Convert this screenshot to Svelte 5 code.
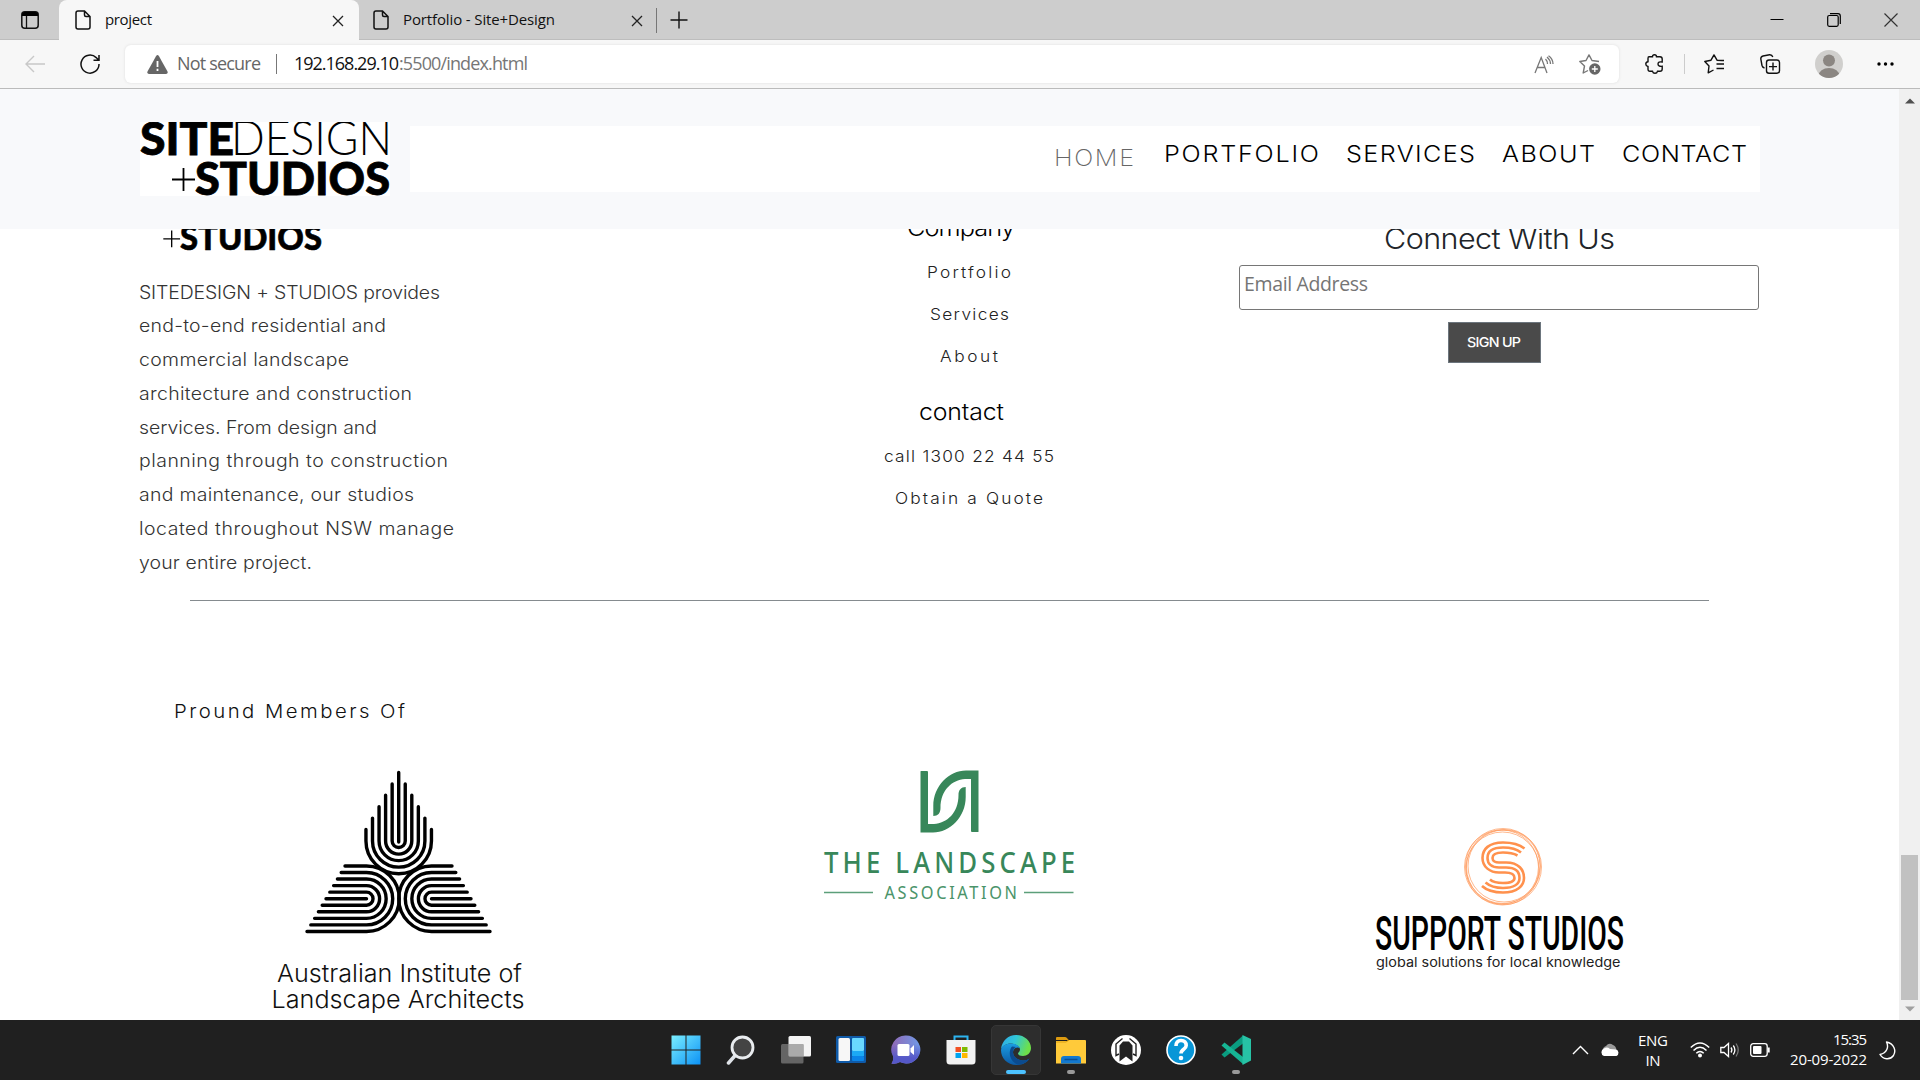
<script>
  // Spreads a line of text to a given width: glyphs are widened by `stretch`,
  // and letter-spacing takes up the rest.
  function fit(node, [width, stretch = 1]) {
    const natural = node.getBoundingClientRect().width;
    const gaps = node.textContent.length - 1;
    const inner = width / stretch;
    const spacing = (inner - natural) / gaps;
    node.style.letterSpacing = `${spacing}px`;
    node.style.marginRight = `${width - inner - spacing}px`;
    if (stretch !== 1) {
      node.style.display = 'inline-block';
      node.style.transformOrigin = '0 50%';
      node.style.transform = `scaleX(${stretch})`;
    }
  }

  const nav = [
    { label: 'PORTFOLIO', w: 155 },
    { label: 'SERVICES', w: 129 },
    { label: 'ABOUT', w: 93 },
    { label: 'CONTACT', w: 125 }
  ];

  const about = [
    ['SITEDESIGN + STUDIOS provides', 301],
    ['end-to-end residential and', 247],
    ['commercial landscape', 210],
    ['architecture and construction', 273],
    ['services. From design and', 238],
    ['planning through to construction', 309],
    ['and maintenance, our studios', 275],
    ['located throughout NSW manage', 315],
    ['your entire project.', 173]
  ];

  const company = [['Portfolio', 84], ['Services', 79], ['About', 58]];
  const contact = [['call 1300 22 44 55', 170], ['Obtain a Quote', 148]];
  const rings = [1, 2, 3, 4, 5];
</script>

{#snippet brand()}
  <svg class="brand" viewBox="0 0 250 74">
    <rect width="250" height="74" fill="#fff" />
    <text class="heavy" x="0" y="33.2" textLength="94" lengthAdjust="spacingAndGlyphs">SITE</text>
    <text class="hair" x="91" y="33.2" textLength="161" lengthAdjust="spacingAndGlyphs">DESIGN</text>
    <path d="M32 57.5H55M43.5 46V69" stroke="#000" stroke-width="1.8" />
    <text class="heavy" x="55" y="73" textLength="195" lengthAdjust="spacingAndGlyphs">STUDIOS</text>
  </svg>
{/snippet}

{#snippet page()}
  <svg class="doc" viewBox="0 0 16 20"><path d="M3 1H9.5L15 6.5V17a2 2 0 0 1-2 2H3a2 2 0 0 1-2-2V3a2 2 0 0 1 2-2ZM9.5 1V5a1.5 1.5 0 0 0 1.5 1.5H15" fill="none" stroke="#111" stroke-width="1.5" /></svg>
{/snippet}

{#snippet cross()}
  <svg class="cross" viewBox="0 0 12 12"><path d="M1 1L11 11M11 1L1 11" stroke="#222" stroke-width="1.3" /></svg>
{/snippet}

<div class="screen">
  <div class="tabs">
    <div class="actions">
      <svg width="18" height="18" viewBox="0 0 18 18"><rect x=".8" y=".8" width="16.4" height="16.4" rx="3" fill="none" stroke="#111" stroke-width="1.5" /><path d="M1 5V3.5A2.5 2.5 0 0 1 3.5 1h11A2.500 2.500 0 0 1 17 3.500V5Z" /><path d="M5.500 5V17" stroke="#111" stroke-width="1.300" /></svg>
    </div>
    <div class="tab active">{@render page()}<span class="tt" use:fit={[47]}>project</span>{@render cross()}</div>
    <div class="tab">{@render page()}<span class="tt" use:fit={[152]}>Portfolio - Site+Design</span>{@render cross()}</div>
    <div class="newtab"><svg width="18" height="18" viewBox="0 0 18 18"><path d="M9 .5V17.500M.5 9H17.500" stroke="#111" stroke-width="1.400" /></svg></div>
    <div class="win">
      <svg width="14" height="14"><path d="M.5 6.500H13.500" stroke="#000" /></svg>
      <svg width="14" height="14"><rect x=".7" y="2.500" width="10.500" height="10.800" rx="1.500" fill="none" stroke="#000" stroke-width="1.200" /><path d="M3 .7H11A2.300 2.300 0 0 1 13.300 3V11" fill="none" stroke="#000" stroke-width="1.200" /></svg>
      <svg width="14" height="14"><path d="M.5 .5L13.500 13.500M13.500 .5L.5 13.500" stroke="#333" stroke-width="1.200" /></svg>
    </div>
  </div>

  <div class="toolbar">
    <svg class="back" width="20" height="18"><path d="M9 1L1 9L9 17M1 9H20" fill="none" stroke="#c8c8c8" stroke-width="1.400" /></svg>
    <svg class="reload" width="20" height="20"><path d="M19 10A9 9 0 1 1 16.200 3.600L18.500 6M19 1V6.300H13.500" fill="none" stroke="#111" stroke-width="1.500" /></svg>
    <div class="address">
      <svg class="warn" width="21" height="19"><path d="M9 1.200Q10.500-1 12 1.200L20.500 16.500Q21.200 19 19 19H2Q-.2 19 .5 16.500Z" fill="#666" /><path d="M10.500 6V12M10.500 13.800V16" stroke="#fff" stroke-width="1.800" /></svg>
      <span class="ns" use:fit={[84]}>Not secure</span>
      <i></i>
      <span class="ip" use:fit={[105]}>192.168.29.10</span><span class="path" use:fit={[129]}>:5500/index.html</span>
      <svg class="aloud" width="20" height="19"><path d="M1 18L7.200 2.500L13 18M3.200 12.500H11M11.500 4Q13.500 6 13.500 9M13 2Q16.500 5 16.500 9M14.500 .8Q19 4 19 9" fill="none" stroke="#777" stroke-width="1.300" /></svg>
      <svg class="fav" width="22" height="21"><path d="M20 7.500L13 6.500L10 .9L7 6.500L.8 7.500L5.500 12L4.200 19L9 16.500" fill="none" stroke="#777" stroke-width="1.400" stroke-linejoin="round" /><circle cx="15.800" cy="15" r="5.700" fill="#666" /><path d="M12.800 15H18.800M15.800 12V18" stroke="#fff" stroke-width="1.300" /></svg>
    </div>
    <div class="tools">
      <svg width="20" height="20" viewBox="0 0 20 20"><path d="M4 2.800H7.500Q7.500 .8 9.500 .8T11.500 2.800H15Q17.200 2.800 17.200 5V8Q13 7.300 13 10T17.200 12.300V15Q17.200 17.300 15 17.300H12.500Q12 19.300 10 19.300T7.500 17.300H5Q3 17.300 3 15V12.500Q.8 12 .8 10T3 7.700V4.500Q3 2.800 4 2.800Z" fill="none" stroke="#111" stroke-width="1.400" /></svg>
      <i></i>
      <svg width="21" height="20"><path d="M18 6.500L13 6.200L10 .9L7 6.200L.8 7.500L5 12L4.200 18.800L9.500 16M12.500 10H20M12.500 14.500H20M14 6.500H20" fill="none" stroke="#111" stroke-width="1.400" stroke-linejoin="round" /></svg>
      <svg width="21" height="20"><path d="M4.500 14Q2.500 13.500 2 11.500L.8 5Q.7 2.500 3 2L9.500 .8Q12 .6 12.800 3" fill="none" stroke="#111" stroke-width="1.400" /><rect x="6.500" y="6" width="13" height="13.200" rx="2.500" fill="none" stroke="#111" stroke-width="1.400" /><path d="M9 12.600H17M13 8.600V16.600" stroke="#111" stroke-width="1.400" /></svg>
      <svg width="28" height="28"><defs><clipPath id="av"><circle cx="14" cy="14" r="14" /></clipPath></defs><g clip-path="url(#av)"><rect width="28" height="28" fill="#d0cfcd" /><circle cx="14" cy="10.500" r="6" fill="#8b8682" /><ellipse cx="14" cy="26" rx="10.500" ry="8" fill="#8b8682" /></g></svg>
      <svg width="17" height="4"><circle cx="2" cy="2" r="1.700" /><circle cx="8.500" cy="2" r="1.700" /><circle cx="15" cy="2" r="1.700" /></svg>
    </div>
  </div>

  <div class="view">
    <div class="site">
      <header>
        <div class="logo">{@render brand()}</div>
        <nav>
          <a class="home"><span use:fit={[80, 1.12]}>HOME</span></a>
          {#each nav as n}<a><span use:fit={[n.w, 1.12]}>{n.label}</span></a>{/each}
        </nav>
      </header>

      <section class="columns">
        <div class="col-a">
          <div class="small-logo">{@render brand()}</div>
          {#each about as [line, w]}<p><span use:fit={[w, 1.08]}>{line}</span></p>{/each}
        </div>
        <div class="col-b">
          <h3><span use:fit={[108, 1.1]}>Company</span></h3>
          {#each company as [t, w]}<a><span use:fit={[w, 1.08]}>{t}</span></a>{/each}
          <h3 class="second"><span use:fit={[85, 1.08]}>contact</span></h3>
          {#each contact as [t, w]}<a><span use:fit={[w, 1.08]}>{t}</span></a>{/each}
        </div>
        <div class="col-c">
          <h2><span use:fit={[231, 1.09]}>Connect With Us</span></h2>
          <div class="input"><span use:fit={[124]}>Email Address</span></div>
          <button><span use:fit={[54, 1.06]}>SIGN UP</span></button>
        </div>
      </section>
      <hr />
      <h4><span use:fit={[231, 1.1]}>Pround Members Of</span></h4>

      <section class="members">
        <svg class="aila" viewBox="270 765 260 255" width="260" height="255">
          <g fill="none" stroke="#000" stroke-width="3.400" stroke-linecap="round">
            <path d="M398.700 772.500V842M326 898.700H366.500M471 898.700H431.500" />
            {#each rings as k}
              <path d="M{398.7 - 6.55 * k} {772.5 + 11.4 * k}V841A{6.55 * k} {6.55 * k} 0 0 0 {398.7 + 6.55 * k} 841V{772.5 + 11.4 * k}" />
              <path d="M{326 + 3.8 * k} {898.7 - 6.55 * k}H366.500A{6.55 * k} {6.55 * k} 0 0 1 366.500 {898.7 + 6.55 * k}H{326 - 3.8 * k}" />
              <path d="M{471 - 3.8 * k} {898.7 - 6.55 * k}H431.500A{6.55 * k} {6.55 * k} 0 0 0 431.500 {898.7 + 6.55 * k}H{471 + 3.8 * k}" />
            {/each}
          </g>
          <text class="thin" x="277" y="981.700" textLength="245" lengthAdjust="spacingAndGlyphs">Australian Institute of</text>
          <text class="thin" x="271.500" y="1007.500" textLength="253" lengthAdjust="spacingAndGlyphs">Landscape Architects</text>
        </svg>

        <svg class="land" viewBox="0 0 300 160" width="300" height="160">
          <g fill="#38875a">
            <path d="M120.500 21.500Q120.500 21 121 21H127Q128 21 128 22V74H134C147 73 158.500 63 158.500 45C158.500 40 161 37 165.700 37V47C165.700 67 150 82.500 133 82.500H120.500Z" />
            <path transform="rotate(180 149.500 51.500)" d="M120.500 21.500Q120.500 21 121 21H127Q128 21 128 22V74H134C147 73 158.500 63 158.500 45C158.500 40 161 37 165.700 37V47C165.700 67 150 82.500 133 82.500H120.500Z" />
          </g>
          <text class="the" transform="translate(24 123.300) scale(.92 1)" textLength="273">THE LANDSCAPE</text>
          <text class="assoc" transform="translate(84.500 148.500) scale(.86 1)" textLength="154">ASSOCIATION</text>
          <path d="M24 142.500H73M224 142.500H273.500" stroke="#5c9f7a" stroke-width="1.300" />
        </svg>

        <svg class="support" viewBox="20 15 260 150" width="260" height="150">
          <g fill="none" stroke="#ff9a5c" stroke-width=".7">
            <circle cx="151.500" cy="57" r="37" /><circle cx="154" cy="57" r="37.500" /><circle cx="153" cy="56" r="37.500" /><circle cx="152.500" cy="58.500" r="36.500" /><circle cx="154" cy="56" r="36" />
          </g>
          <g fill="none" stroke="#ff914d" stroke-width="2.600">
            <path d="M174.500 38.500Q167 32.500 153 32.500C139 32.500 132.500 39 132.500 48S140 62.500 149 62.500H155C162 62.500 164.500 65 164.500 68S161 73 153 73Q144 73 140 69.500" />
            <path d="M171 42.500Q165 37.500 153 37.500C142 37.500 137.500 42 137.500 48S142 57.500 149 57.500H156C166 57.500 169.500 62 169.500 68S164 78 153 78Q142 78 135.500 72.500" />
            <path d="M167.500 45.500Q162 42.500 153 42.500C145.500 42.500 142.500 45 142.500 48S145.500 52.500 149 52.500H156C169 52.500 174 60 174 68S167 82.500 153 82.500Q139 82.500 132 76" />
          </g>
          <text class="sup" x="25" y="140.300" textLength="249" lengthAdjust="spacingAndGlyphs">SUPPORT STUDIOS</text>
          <text class="tag" x="26" y="156.500" textLength="244.500" lengthAdjust="spacingAndGlyphs">global solutions for local knowledge</text>
        </svg>
      </section>
    </div>
    <div class="scroll">
      <svg width="10" height="6"><path d="M0 5.500L5 .5L10 5.500Z" fill="#505050" /></svg>
      <div class="thumb"></div>
      <svg width="10" height="6"><path d="M0 .5L5 5.500L10 .5Z" fill="#a0a0a0" /></svg>
    </div>
  </div>

  <footer>
    <div class="apps">
      <div class="app"><svg viewBox="0 0 30 30"><defs><linearGradient id="w" gradientUnits="userSpaceOnUse" x1="0" y1="0" x2="30" y2="30"><stop offset="0" stop-color="#7cf0ff" /><stop offset="1" stop-color="#0a90f5" /></linearGradient></defs><path fill="url(#w)" d="M.5 .5H14.500V14.500H.5ZM15.500 .5H29.500V14.500H15.500ZM.5 15.500H14.500V29.500H.5ZM15.500 15.500H29.500V29.500H15.500Z" /></svg></div>
      <div class="app"><svg viewBox="0 0 30 30"><path d="M2.500 28L10 19.500" stroke="#dfe3e8" stroke-width="3.500" stroke-linecap="round" /><circle cx="16.500" cy="12.500" r="10.500" fill="#444" stroke="#e9ecef" stroke-width="2.800" /></svg></div>
      <div class="app"><svg viewBox="0 0 30 30"><rect x="7.500" y="1" width="22.500" height="20.500" rx="1.500" fill="#f4f4f4" /><rect x="0" y="9" width="22.500" height="19.500" rx="1.500" fill="#777" fill-opacity=".8" /><path d="M7.500 9H22.500V21.500H9Q7.500 21.500 7.500 20Z" fill="#aaa" /></svg></div>
      <div class="app"><svg viewBox="0 0 30 30"><rect y="1" width="30" height="27" rx="1.500" fill="#0f5aa8" /><rect x="2.500" y="3" width="11.500" height="23" rx="1.500" fill="#f7f7f7" /><rect x="16" y="3" width="12" height="13" rx="1" fill="#69d8ff" /><rect x="16" y="16" width="12" height="5" fill="#1ba9f5" /><rect x="16" y="21" width="12" height="5" rx="1" fill="#0a84e8" /></svg></div>
      <div class="app"><svg viewBox="0 0 30 30"><defs><linearGradient id="c" x1="0" y1="0" x2="1" y2="0"><stop offset="0" stop-color="#9268b5" /><stop offset="1" stop-color="#6f9be8" /></linearGradient><linearGradient id="c2" x1="0" y1="0" x2="0" y2="1"><stop offset=".3" stop-color="#5558c8" stop-opacity="0" /><stop offset=".8" stop-color="#5558c8" /></linearGradient></defs><path fill="url(#c)" d="M15 .5A14 14 0 1 1 9 27Q5 29.500 .5 28.500Q3 25 2 21A14 14 0 0 1 15 .5Z" /><path fill="url(#c2)" d="M15 .5A14 14 0 1 1 9 27Q5 29.500 .5 28.500Q3 25 2 21A14 14 0 0 1 15 .5Z" /><rect x="6.500" y="9" width="12" height="12" rx="1.500" fill="#fff" /><path d="M19.500 13.500L23 10V20L19.500 17Z" fill="#fff" /></svg></div>
      <div class="app"><svg viewBox="0 0 30 30"><path d="M8.500 7V1.500H21.500V7" fill="none" stroke="#2cb4f0" stroke-width="2" /><path d="M.5 5H29.500V26Q29.500 29.500 26 29.500H4Q.5 29.500 .5 26Z" fill="#f2f2f2" /><path fill="#f25022" d="M9.500 12H15V17H9.500Z" /><path fill="#7fba00" d="M16 12H21.500V17H16Z" /><path fill="#00a4ef" d="M9.500 18H15V23H9.500Z" /><path fill="#ffb900" d="M16 18H21.500V23H16Z" /></svg></div>
      <div class="app current"><svg viewBox="0 0 30 30"><defs><linearGradient id="e" x1="0" y1="0" x2="1" y2=".3"><stop offset="0" stop-color="#2fa8e8" /><stop offset=".5" stop-color="#30c6d8" /><stop offset="1" stop-color="#6de04a" /></linearGradient><linearGradient id="e2" x1="0" y1="0" x2="0" y2="1"><stop offset="0" stop-color="#1b9de2" /><stop offset="1" stop-color="#0c59a4" /></linearGradient></defs><path fill="url(#e)" d="M0 14C1 6 7 0 15 0C24 0 30 6.500 30 13C30 18 26 21 22 21C18.500 21 17 19.500 17 18.500C17 17.500 19 17 19 14.500C19 11 14 8.500 10 8.500C5 8.500 1.500 11 0 14Z" /><path fill="url(#e2)" d="M0 15C.5 11 5 8.500 10 8.500C14 8.500 18 10.500 19 13C14 11 12 15 12 17.500C12 22 17 25.500 22 25.500C25 25.500 27 24.500 28.500 23.500C25.500 28 21 30 15.500 30C6 30 0 23 0 15Z" /><path fill="#0b4b8f" d="M11 11.500C7 16 8 26 17 29.800C21.500 29.500 26 27.500 28.500 23.500C27 24.500 25 25.500 22 25.500C17 25.500 12 22 12 17.500C12 15 13 12.500 15 12Z" /></svg><b></b></div>
      <div class="app"><svg viewBox="0 0 30 30"><path d="M0 3Q0 2 1 2H9Q10 2 11 3L12.500 5H0Z" fill="#dc9a10" /><path d="M0 6H11L13 5H29Q30 5 30 6V28.500H0Z" fill="#ffca3a" /><path d="M0 7H10L13 5" stroke="#e0a010" fill="none" /><path d="M5 28.500V24Q5 21 8 21H22Q25 21 25 24V28.500Z" fill="#1379cf" /><path d="M8.500 24.500H21.500" stroke="#0a4f94" stroke-width="1.500" /></svg><b class="dot"></b></div>
      <div class="app"><svg viewBox="0 0 30 30"><circle cx="15" cy="15" r="15" fill="#fff" /><path d="M8.500 26.500V10.500L12 6.500H18L21.500 10.500V26.500L15 21.500Z" fill="#222" /><path d="M11.500 3.500L5 9V20.500L8 19M18.500 3.500L25 9V20.500L22 19" fill="none" stroke="#222" stroke-width="1.400" /></svg></div>
      <div class="app"><svg viewBox="0 0 30 30"><circle cx="15" cy="15" r="14" fill="#0896d7" stroke="#fff" stroke-width="1.600" /><path d="M10 11Q10 5.500 15 5.500T20.200 10.500C20.200 14.500 15 14 15 18.500" fill="none" stroke="#fff" stroke-width="3.600" /><circle cx="15" cy="23" r="2.300" fill="#fff" /></svg></div>
      <div class="app"><svg viewBox="0 0 30 30"><path d="M.5 19.500L3.500 22.500L22 8.500V.5Z" fill="#0a9c80" /><path d="M.5 10.500L3.500 7.500L22 22V29Z" fill="#16b594" /><path d="M21.500 0L30 4V25.500L21.500 30Z" fill="#27c2a5" /></svg><b class="dot"></b></div>
    </div>
    <div class="tray">
      <svg class="chev" width="17" height="10"><path d="M1 9L8.500 1.500L16 9" fill="none" stroke="#fff" stroke-width="1.400" /></svg>
      <svg class="cloud" width="20" height="14"><path d="M3 9A5 5 0 0 1 6 3Q9 -1 13 2Q16 3 16.500 7Z" fill="#999" /><path d="M4 13A4 4 0 0 1 4 5.500Q7 3.500 10 6L16 6.500A3.500 3.500 0 0 1 16.500 13Z" fill="#fff" /></svg>
      <div class="lang"><span use:fit={[30]}>ENG</span><span use:fit={[15]}>IN</span></div>
      <svg class="wifi" width="20" height="16"><path d="M.8 5.500Q10-3.500 19.200 5.500M3.500 8.500Q10 2 16.500 8.500M6.300 11.300Q10 7.500 13.700 11.300" fill="none" stroke="#fff" stroke-width="1.500" /><circle cx="10" cy="13.500" r="2" fill="#fff" /></svg>
      <svg class="vol" width="20" height="16"><path d="M.8 5.500H4L8.500 1.500V14.500L4 10.500H.8ZM11 5.500Q12.800 8 11 10.500M13.300 3.500Q16.500 8 13.300 12.500" fill="none" stroke="#fff" stroke-width="1.300" /><path d="M16 1.500Q20.500 8 16 14.500" fill="none" stroke="#777" stroke-width="1.300" /></svg>
      <svg class="bat" width="20" height="14"><rect x=".7" y=".7" width="16.500" height="12.600" rx="2.500" fill="none" stroke="#fff" stroke-width="1.300" /><rect x="3" y="3" width="8.500" height="8" rx="1" fill="#fff" /><path d="M18.700 4.500V9.500" stroke="#fff" stroke-width="2" /></svg>
      <div class="clock"><span use:fit={[34]}>15:35</span><span use:fit={[77]}>20-09-2022</span></div>
      <svg class="moon" width="17" height="19"><path d="M7.500 1C10 6 8 12 1 13.500C4 18.500 11 19.500 14.500 14.500C17.500 9.500 15 2.500 7.500 1Z" fill="none" stroke="#fff" stroke-width="1.400" stroke-linejoin="round" /></svg>
    </div>
  </footer>
</div>

<style>
  :global(body) { margin: 0; background: #fff; overflow: hidden; }
  * { box-sizing: border-box; }
  svg { display: block; flex: none; }
  span { white-space: pre; }
  .screen { width: 1920px; height: 1080px; overflow: hidden; display: flex; flex-direction: column; font-family: 'Open Sans', 'Noto Sans', sans-serif; color: #111; }

  .tabs { height: 40px; background: #cdcdcd; display: flex; flex: none; border-bottom: 1px solid #bdbdbd; }
  .actions { width: 59px; padding: 11px 0 0 21px; }
  .tab { width: 298px; height: 40px; display: flex; align-items: center; padding: 0 14px 8px 14px; }
  .tab.active { width: 300px; background: #f7f7f7; border-radius: 8px 8px 0 0; padding: 0 15px 8px 16px; }
  .doc { width: 16px; height: 20px; margin: 8px 14px 0 0; }
  .cross { width: 12px; height: 12px; margin: 9px 0 0 auto; }
  .tt { font-size: 15px; line-height: 20px; margin-top: 6px; }
  .newtab { height: 25px; margin: 8px 0 0 -1px; border-left: 1px solid #777; padding: 3px 0 0 13px; }
  .win { margin-left: auto; display: flex; gap: 43px; padding: 13px 22px 0 0; }

  .toolbar { height: 49px; flex: none; background: #f7f7f7; border-bottom: 1px solid #bbb; display: flex; align-items: center; padding: 0 26px 0 25px; }
  .reload { margin-left: 35px; }
  .address { width: 1494px; height: 38px; margin-left: 25px; background: #fff; border-radius: 6px; box-shadow: 0 0 3px #ddd; display: flex; align-items: center; padding: 0 18px 0 22px; font-size: 18px; line-height: 24px; flex: none; }
  .address span { margin-top: -2px; }
  .ns { margin-left: 9px; color: #666; }
  .address i { width: 1px; height: 20px; background: #777; margin: 0 17px 0 15px; }
  .path { color: #767676; }
  .aloud { margin-left: auto; }
  .fav { margin-left: 25px; }
  .tools { display: flex; align-items: center; margin-left: 26px; flex: 1; justify-content: space-between; }
  .tools i { width: 1px; height: 20px; background: #ccc; margin: 0 -15px; }

  .view { flex: 1; min-height: 0; display: flex; overflow: hidden; }
  .site { width: 1899px; flex: none; font-family: Inter, 'Open Sans', sans-serif; font-weight: 300; }
  header { height: 140px; background: #f8f9fb; position: relative; z-index: 2; display: flex; padding: 33px 139px 0 140px; }
  .logo { width: 250px; margin-right: 20px; }
  nav { flex: 1; height: 66px; margin-top: 4px; background: #fff; display: flex; justify-content: flex-end; padding: 13px 13px 0 0; gap: 27px; font-size: 22.500px; line-height: 30px; color: #000; }
  .home { padding-top: 4px; margin-right: 3px; color: #666; font-weight: 200; }
  .brand { width: 100%; }
  .brand text { font-family: Lato, sans-serif; font-size: 46.500px; }
  .brand .heavy { font-weight: 900; stroke: #000; stroke-width: .8; }
  .brand .hair { font-weight: 300; }

  .columns { height: 371px; display: flex; padding: 0 140px; }
  .col-a { width: 350px; margin-top: -32px; }
  .small-logo { width: 182px; height: 54px; margin-bottom: 24.500px; }
  p { margin: 0 0 0 -1px; height: 33.750px; line-height: 33.750px; font-size: 18px; color: #333; }
  .col-b { width: 200px; margin: -16px 0 0 379px; display: flex; flex-direction: column; align-items: center; }
  .col-b h3 { margin: 0 16px 8px 0; font-weight: 300; font-size: 23px; line-height: 30px; color: #000; }
  .col-b h3.second { margin-top: 19.500px; }
  .col-b a { font-size: 16px; height: 42px; line-height: 42px; color: #222; }
  .col-c { width: 520px; margin: -9px 0 0 170px; display: flex; flex-direction: column; align-items: center; }
  h2 { margin: 0; font-weight: 300; font-size: 28px; line-height: 38px; height: 45px; color: #212529; }
  .input { width: 520px; height: 45px; border: 1px solid #767676; border-radius: 3px; padding: 4px 0 0 4px; font: 400 19.500px/27px 'Open Sans', sans-serif; color: #757575; }
  button { margin: 12px 10px 0 0; width: 93px; height: 41px; padding: 0 0 2px; border: 1px solid #6c757d; background: #4a4a4a; color: #fff; font: 500 13.500px/20px Inter, sans-serif; }
  hr { width: 1519px; height: 1px; border: 0; background: #858b8f; margin: 0 0 0 190px; }
  h4 { margin: 95px 0 0 174px; font-weight: 300; font-size: 18.500px; line-height: 30px; color: #111; }
  .members { display: flex; margin-top: 39px; padding-left: 270px; align-items: flex-start; }
  .land { margin: -15px 0 0 270px; }
  .support { margin: 60px 0 0 270px; }
  .thin { font: 300 24px Inter, sans-serif; fill: #111; }
  .the { font: 500 28px 'Noto Sans', sans-serif; fill: #38875a; }
  .assoc { font: 400 19px 'Noto Sans', sans-serif; fill: #4b946a; }
  .sup { font: 500 47.500px Roboto, sans-serif; }
  .tag { font: 400 13px Inter, sans-serif; fill: #222; }

  .scroll { width: 21px; background: #f0f0f0; display: flex; flex-direction: column; align-items: center; padding: 9px 0 8px; }
  .thumb { width: 17px; height: 145px; background: #c1c1c1; margin: auto 0 6px; }

  footer { height: 60px; flex: none; background: #202020; display: flex; align-items: center; padding-left: 661px; color: #fff; }
  .apps { display: flex; gap: 5px; }
  .app { width: 50px; height: 50px; border-radius: 5px; padding: 10px; position: relative; }
  .app svg { width: 30px; height: 30px; }
  .app.current { background: #2d2d2d; border: 1px solid #363636; padding: 9px; }
  .app b { position: absolute; left: 14px; bottom: 0; width: 20px; height: 4px; border-radius: 2px; background: #4cc2ff; }
  .app b.dot { left: 21px; bottom: 1px; width: 8px; background: #999; }
  .tray { margin-left: auto; display: flex; align-items: center; padding-right: 24px; font-size: 15px; line-height: 20px; }
  .cloud { margin-left: 11px; }
  .lang, .clock { display: flex; flex-direction: column; }
  .lang { align-items: center; width: 30px; margin: 0 0 0 18px; }
  .wifi { margin-left: 22px; }
  .vol { margin-left: 10px; }
  .bat { margin-left: 10px; }
  .clock { width: 77px; margin: -2px 0 0 20px; align-items: flex-end; }
  .moon { margin-left: 12px; }
</style>
